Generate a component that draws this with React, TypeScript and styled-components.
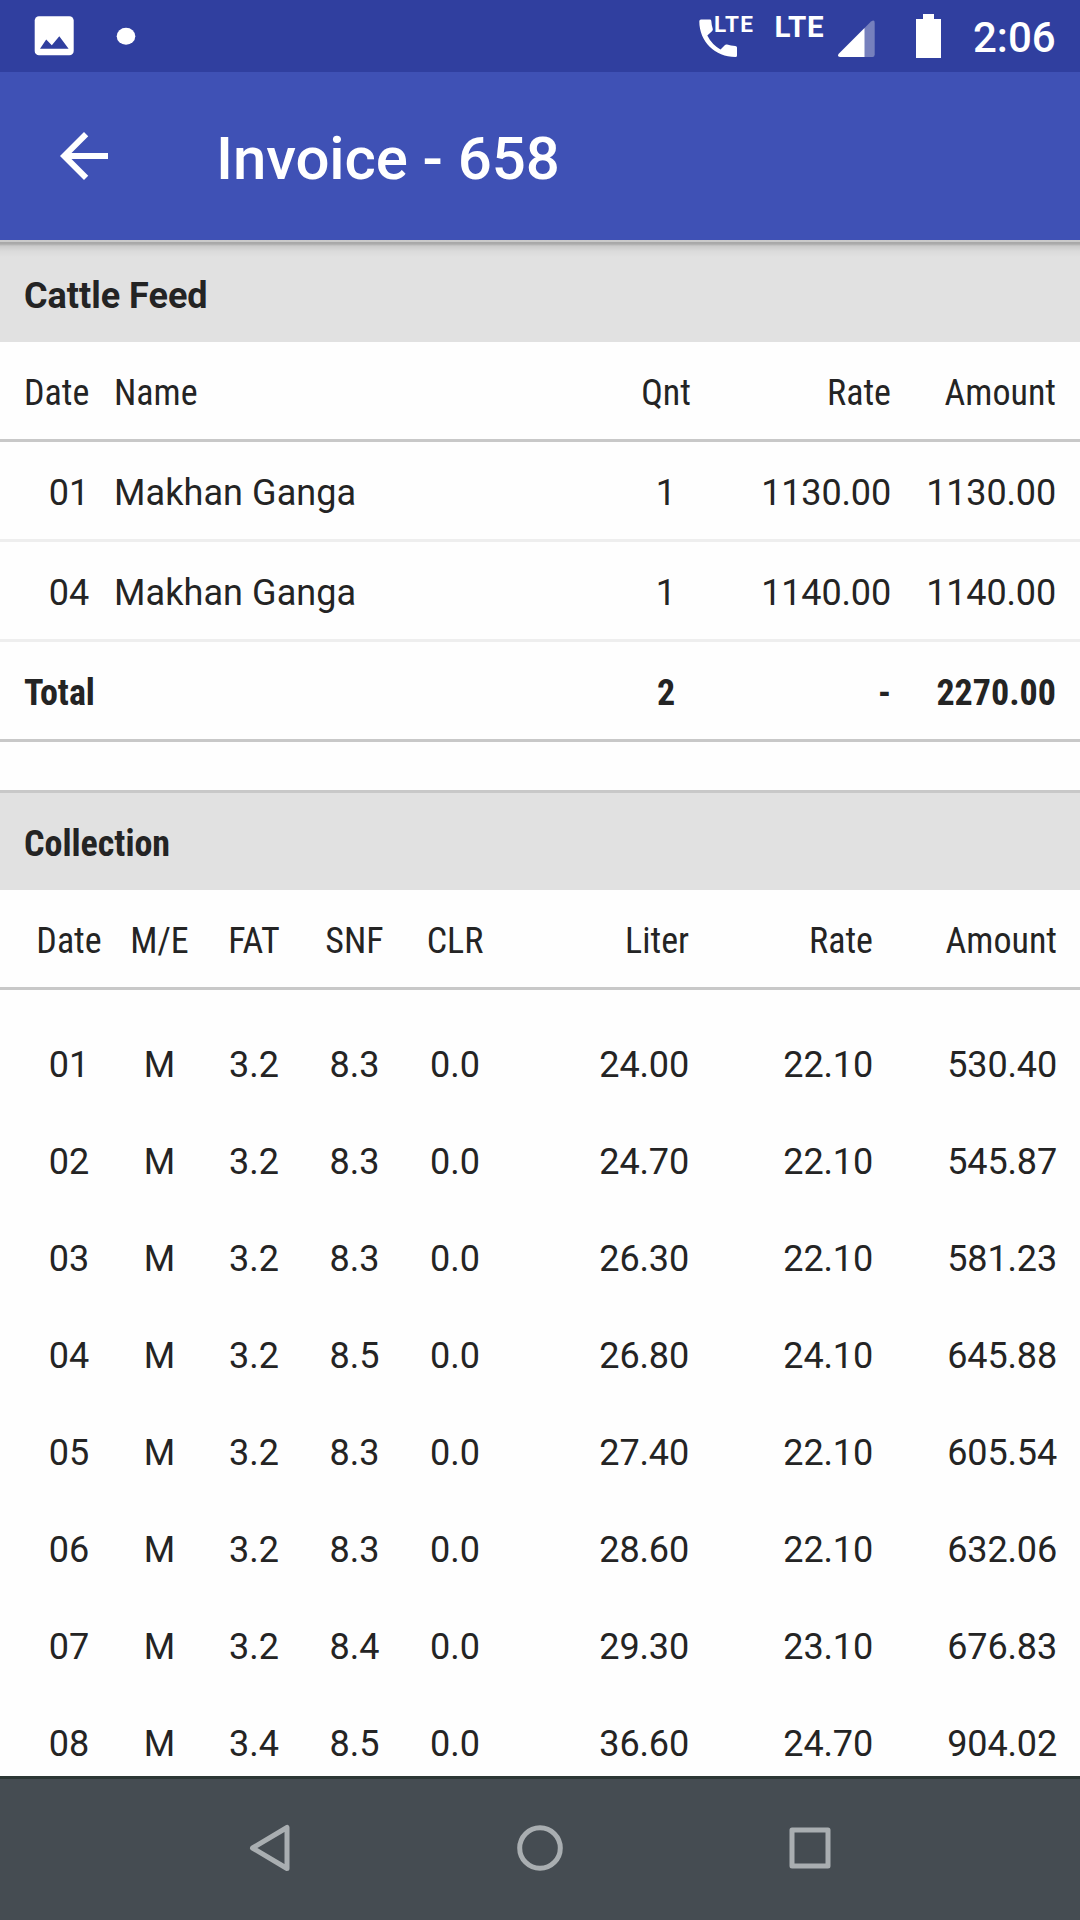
import React from "react";
import styled, { createGlobalStyle } from "styled-components";

const GlobalStyle = createGlobalStyle`
  * { box-sizing: border-box; }
  html, body { margin: 0; padding: 0; background: #fff; }
`;

const Screen = styled.div`
  width: 1080px;
  height: 1920px;
  overflow: hidden;
  display: flex;
  flex-direction: column;
  background: #fefefe;
  color: #242424;
  font-family: Roboto, "Liberation Sans", sans-serif;
`;

const StatusBar = styled.header`
  height: 72px;
  flex: none;
  display: flex;
  justify-content: space-between;
  background: #303f9f;
  color: #fff;
`;

const StatusSide = styled.div`
  display: flex;
  height: 72px;
`;

const StatusText = styled.text`
  font-family: Roboto, "Liberation Sans", sans-serif;
  fill: #fff;
`;

const Clock = styled.div`
  width: 107px;
  line-height: 75px;
  font-size: 42px;
  font-weight: 500;
  white-space: nowrap;
`;

const AppBar = styled.div`
  height: 168px;
  flex: none;
  position: relative;
  display: flex;
  align-items: center;
  gap: 96px;
  padding: 0 48px;
  background: #3f51b5;
  color: #fff;
  &::after {
    content: "";
    position: absolute;
    left: 0;
    right: 0;
    top: 100%;
    height: 18px;
    background: linear-gradient(
      to bottom,
      rgba(0, 0, 0, 0.1) 0, rgba(0, 0, 0, 0.1) 2px,
      rgba(0, 0, 0, 0.26) 2px, rgba(0, 0, 0, 0.24) 4px,
      rgba(0, 0, 0, 0.1) 6px, rgba(0, 0, 0, 0.03) 11px, rgba(0, 0, 0, 0) 17px
    );
  }
`;

const BackIcon = styled.svg`
  width: 72px;
  height: 72px;
  fill: #fff;
`;

const Title = styled.h1`
  margin: 6px 0 0;
  font-size: 60px;
  line-height: 70px;
  font-weight: 500;
  letter-spacing: -0.1px;
`;

const Content = styled.main`
  flex: 1;
  min-height: 0;
  overflow: hidden;
`;

const SectionHead = styled.h2<{ $divided?: boolean }>`
  margin: 0;
  height: ${(p) => (p.$divided ? 100 : 102)}px;
  padding: 0 24px;
  line-height: ${(p) => (p.$divided ? 103 : 112)}px;
  font-size: 36px;
  font-weight: 700;
  background: #e1e1e1;
  ${(p) => (p.$divided ? "border-top: 3px solid #c8c8c8;" : "")}
`;

const Row = styled.div<{ $cols: string; $line?: string }>`
  display: grid;
  grid-template-columns: ${(p) => p.$cols};
  height: ${(p) => (p.$line ? 100 : 97)}px;
  padding: 0 24px;
  line-height: 102px;
  font-size: 36px;
  ${(p) => (p.$line ? `border-bottom: 3px solid ${p.$line};` : "")}
`;

const Cell = styled.div<{ $align?: string }>`
  text-align: ${(p) => p.$align || "left"};
  letter-spacing: ${(p) => (p.$align === "right" ? "-0.15px" : "0.08px")};
  white-space: nowrap;
`;

const Condensed = styled.span<{ $bold?: boolean }>`
  font-family: "Roboto Condensed", Roboto, sans-serif;
  font-stretch: 75%;
  letter-spacing: 0;
  font-weight: ${(p) => (p.$bold ? 700 : 400)};
`;

const Spacer = styled.div<{ $h: number }>`
  height: ${(p) => p.$h}px;
`;

const NavBar = styled.nav`
  height: 144px;
  flex: none;
  display: flex;
  justify-content: center;
  gap: 198px;
  align-items: flex-start;
  padding-top: 33px;
  border-top: 3px solid #2c3735;
  background: #454c52;
`;

const NavIcon = styled.svg`
  width: 72px;
  height: 72px;
  fill: none;
  stroke: #a9aeb1;
  stroke-width: 5;
  stroke-linejoin: round;
`;

const FEED_COLS = "65px 25px 478px 148px 151px 165px";
const MILK_COLS = "90px 91px 98px 103px 98px 185px 184px 184px";
const DARK = "#c8c8c8";
const LIGHT = "#eeeeee";

const feed = [
  ["01", "Makhan Ganga", "1", "1130.00", "1130.00"],
  ["04", "Makhan Ganga", "1", "1140.00", "1140.00"],
];

const milk = [
  ["01", "M", "3.2", "8.3", "0.0", "24.00", "22.10", "530.40"],
  ["02", "M", "3.2", "8.3", "0.0", "24.70", "22.10", "545.87"],
  ["03", "M", "3.2", "8.3", "0.0", "26.30", "22.10", "581.23"],
  ["04", "M", "3.2", "8.5", "0.0", "26.80", "24.10", "645.88"],
  ["05", "M", "3.2", "8.3", "0.0", "27.40", "22.10", "605.54"],
  ["06", "M", "3.2", "8.3", "0.0", "28.60", "22.10", "632.06"],
  ["07", "M", "3.2", "8.4", "0.0", "29.30", "23.10", "676.83"],
  ["08", "M", "3.4", "8.5", "0.0", "36.60", "24.70", "904.02"],
];

type FeedProps = { cells: string[]; line: string; condensed?: boolean; bold?: boolean };

function FeedRow({ cells, line, condensed, bold }: FeedProps) {
  const wrap = (t: string) => (condensed ? <Condensed $bold={bold}>{t}</Condensed> : t);
  return (
    <Row $cols={FEED_COLS} $line={line}>
      <Cell $align={condensed ? "left" : "right"}>{wrap(cells[0])}</Cell>
      <Cell />
      <Cell>{wrap(cells[1])}</Cell>
      <Cell $align="center">{wrap(cells[2])}</Cell>
      <Cell $align="right">{wrap(cells[3])}</Cell>
      <Cell $align="right">{wrap(cells[4])}</Cell>
    </Row>
  );
}

function MilkRow({ cells, line, condensed }: { cells: string[]; line?: string; condensed?: boolean }) {
  return (
    <Row $cols={MILK_COLS} $line={line}>
      {cells.map((t, i) => (
        <Cell key={i} $align={i < 5 ? "center" : "right"}>
          {condensed ? <Condensed>{t}</Condensed> : t}
        </Cell>
      ))}
    </Row>
  );
}

export default function App() {
  return (
    <Screen>
      <GlobalStyle />
      <StatusBar>
        <StatusSide>
          <svg width="150" height="72" viewBox="0 0 150 72">
            <rect x="34.7" y="16.3" width="39" height="39" rx="4.3" fill="#fff" />
            <path d="M40 48.7 L46.2 39.5 L51.8 45.3 L59.3 36.3 L68.6 48.7 Z" fill="#303f9f" />
            <ellipse cx="126" cy="36.3" rx="9.3" ry="8.5" fill="#fff" />
          </svg>
        </StatusSide>
        <StatusSide>
          <svg width="283" height="72" viewBox="690 0 283 72">
            <path
              d="M701 19.5 H710 Q711 19.5 711.3 20.8 Q711.5 25 712.8 29 Q713 30.2 712.2 31 L707.3 35.5 Q711.8 44.5 720.5 49.5 L725 45 Q725.8 44.2 727 44.6 Q731 45.9 735.2 46 Q737 46.2 737 47.5 V55.5 Q737 57 735.5 57 C715 57 699.3 41.5 699.3 21.2 Q699.3 19.5 701 19.5Z"
              fill="#fff"
            />
            <StatusText x="714" y="32" fontSize="22.5" fontWeight="700" textLength="39">LTE</StatusText>
            <StatusText x="774.5" y="37" fontSize="29.5" fontWeight="700" textLength="49">LTE</StatusText>
            <path d="M864 28.5 L871 21.5 Q874.7 19 874.7 23 V54.5 Q874.7 57 872.5 57 H864Z" fill="#7680bd" />
            <path d="M864.5 28 V57 H840 Q836.5 56.5 839 53.5Z" fill="#fff" />
            <path d="M923 14 H934 V19 H941 V58 H916 V19 H923Z" fill="#fff" />
          </svg>
          <Clock>2:06</Clock>
        </StatusSide>
      </StatusBar>
      <AppBar>
        <BackIcon viewBox="0 0 24 24">
          <path d="M20 11H7.83l5.59-5.59L12 4l-8 8 8 8 1.41-1.41L7.83 13H20v-2z" />
        </BackIcon>
        <Title>Invoice - 658</Title>
      </AppBar>
      <Content>
        <SectionHead>Cattle Feed</SectionHead>
        <FeedRow cells={["Date", "Name", "Qnt", "Rate", "Amount"]} line={DARK} condensed />
        {feed.map((r, i) => (
          <FeedRow key={i} cells={r} line={LIGHT} />
        ))}
        <FeedRow cells={["Total", "", "2", "-", "2270.00"]} line={DARK} condensed bold />
        <Spacer $h={48} />
        <SectionHead $divided>
          <Condensed $bold>Collection</Condensed>
        </SectionHead>
        <MilkRow cells={["Date", "M/E", "FAT", "SNF", "CLR", "Liter", "Rate", "Amount"]} line={DARK} condensed />
        <Spacer $h={24} />
        {milk.map((r, i) => (
          <MilkRow key={i} cells={r} />
        ))}
      </Content>
      <NavBar>
        <NavIcon viewBox="0 0 72 72">
          <path d="M18.5 36 L53 15.5 V56.5Z" />
        </NavIcon>
        <NavIcon viewBox="0 0 72 72">
          <circle cx="36" cy="36" r="20.3" />
        </NavIcon>
        <NavIcon viewBox="0 0 72 72">
          <rect x="18" y="18" width="36" height="36" />
        </NavIcon>
      </NavBar>
    </Screen>
  );
}
